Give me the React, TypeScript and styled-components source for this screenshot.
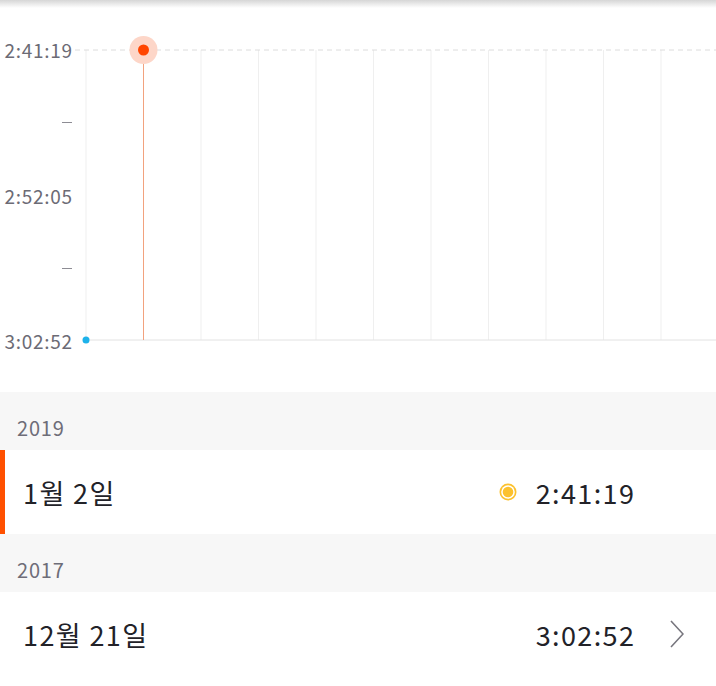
import React from 'react';
import styled, { createGlobalStyle } from 'styled-components';

const GlobalStyle = createGlobalStyle`
  html, body {
    margin: 0;
    padding: 0;
    background: #fff;
    font-family: "Noto Sans CJK KR", "Noto Sans", sans-serif;
  }
`;

const Page = styled.div`
  width: 716px;
  height: 686px;
  overflow: hidden;
  background: #fff;
`;

const TopShadow = styled.div`
  height: 8px;
  background: linear-gradient(#d6d6d6, rgba(255, 255, 255, 0));
`;

const Chart = styled.div`
  display: flex;
  height: 384px;
  padding-top: 30px;
  box-sizing: border-box;
`;

const Axis = styled.div`
  width: 75px;
  height: 315px;
  display: flex;
  flex-direction: column;
  justify-content: space-between;
  align-items: flex-end;
  padding-right: 3px;
  box-sizing: border-box;
`;

const AxisLabel = styled.div`
  height: 24px;
  line-height: 24px;
  font-size: 19px;
  color: #6c6b75;
  letter-spacing: 0.7px;
  margin-right: -0.7px;
`;

const AxisTick = styled.div`
  height: 24px;
  display: flex;
  align-items: center;
  &::after {
    content: '';
    width: 10px;
    height: 1px;
    background: #8d8c94;
  }
`;

const Plot = styled.svg`
  display: block;
  overflow: visible;
`;

const YearHeader = styled.div`
  height: 58px;
  box-sizing: border-box;
  padding: 12px 0 0 17px;
  display: flex;
  align-items: center;
  background: #f7f7f7;
  font-size: 20px;
  letter-spacing: 0.8px;
  color: #6e6d78;
`;

const Row = styled.div<{ $active?: boolean }>`
  height: 84px;
  display: flex;
  align-items: center;
  padding: 0 32px 0 23px;
  background: #fff;
  box-shadow: ${(p) => (p.$active ? 'inset 5px 0 0 #ff5000' : 'none')};
  color: #222228;
  font-size: 27px;
  letter-spacing: 1.4px;
`;

const DateText = styled.div`
  flex: 1;
`;

const TimeText = styled.div`
  margin-right: -1.4px;
`;

const Marker = styled.svg`
  margin-right: 19px;
`;

const Chevron = styled.svg<{ $hidden?: boolean }>`
  margin-left: 36px;
  visibility: ${(p) => (p.$hidden ? 'hidden' : 'visible')};
`;

const gridXs = Array.from({ length: 12 }, (_, i) => 11 + i * 57.5);

function TimeChart() {
  return (
    <Chart>
      <Axis>
        <AxisLabel>2:41:19</AxisLabel>
        <AxisTick />
        <AxisLabel>2:52:05</AxisLabel>
        <AxisTick />
        <AxisLabel>3:02:52</AxisLabel>
      </Axis>
      <Plot width={641} height={315}>
        {gridXs.map((x) => (
          <line key={x} x1={x} y1={12} x2={x} y2={302} stroke="#efefef" strokeWidth={1} />
        ))}
        <line x1={0} y1={12} x2={641} y2={12} stroke="#dcdcdc" strokeWidth={1} strokeDasharray="5 4" />
        <line x1={11} y1={302} x2={641} y2={302} stroke="#e2e2e2" strokeWidth={1} />
        <line x1={68.5} y1={12} x2={68.5} y2={302} stroke="#f2a27e" strokeWidth={1} />
        <circle cx={68.5} cy={12} r={14} fill="#fdd6c8" />
        <circle cx={68.5} cy={12} r={5.5} fill="#ff4500" />
        <circle cx={11} cy={302} r={3.5} fill="#1db2ea" />
      </Plot>
    </Chart>
  );
}

function ChevronIcon({ hidden }: { hidden?: boolean }) {
  return (
    <Chevron $hidden={hidden} width={14} height={28} viewBox="0 0 14 28">
      <polyline points="1,1 13,14 1,27" fill="none" stroke="#77767e" strokeWidth={1.6} />
    </Chevron>
  );
}

const records = [
  { year: '2019', date: '1월 2일', time: '2:41:19', best: true },
  { year: '2017', date: '12월 21일', time: '3:02:52', best: false },
];

export default function App() {
  return (
    <Page>
      <GlobalStyle />
      <TopShadow />
      <TimeChart />
      {records.map((r) => (
        <React.Fragment key={r.year}>
          <YearHeader>{r.year}</YearHeader>
          <Row $active={r.best}>
            <DateText>{r.date}</DateText>
            {r.best && (
              <Marker width={18} height={18} viewBox="0 0 18 18">
                <circle cx={9} cy={9} r={8.5} fill="#fcc12d" />
                <circle cx={9} cy={9} r={6.8} fill="#fff" />
                <circle cx={9} cy={9} r={5.3} fill="#fcc12d" />
              </Marker>
            )}
            <TimeText>{r.time}</TimeText>
            <ChevronIcon hidden={r.best} />
          </Row>
        </React.Fragment>
      ))}
    </Page>
  );
}
